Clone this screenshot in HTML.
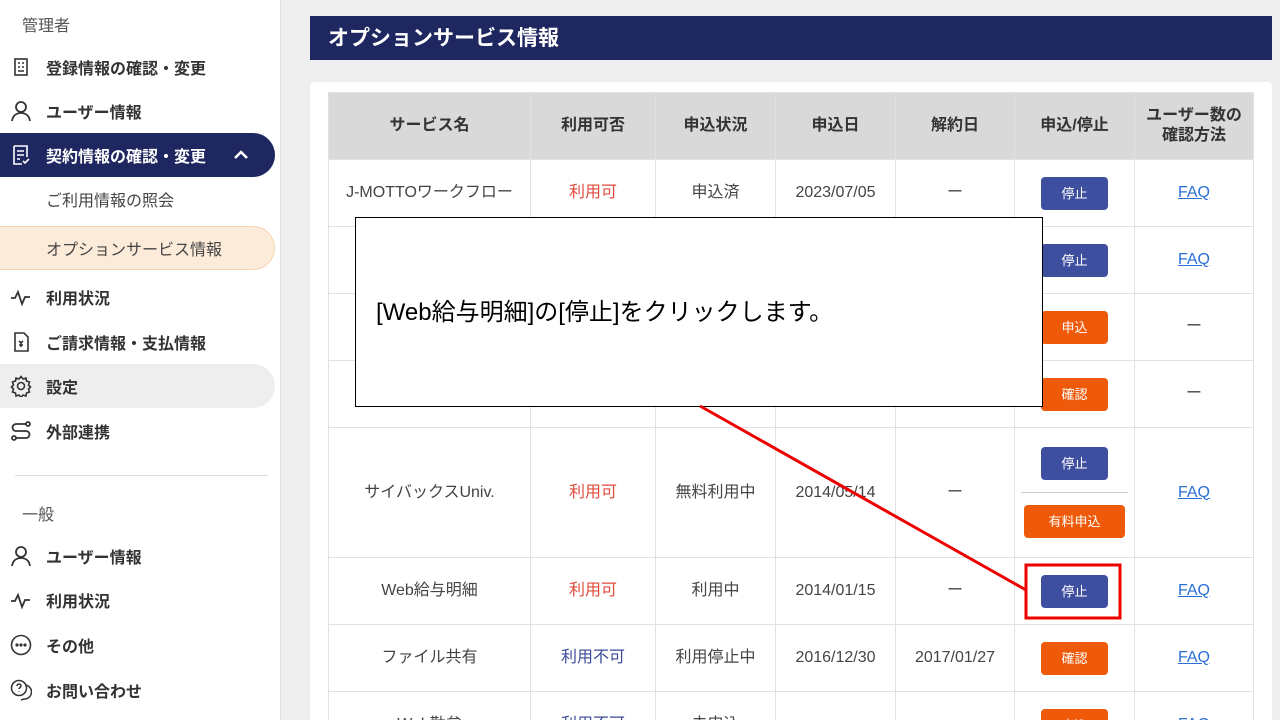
<!DOCTYPE html>
<html style="width:1280px;height:720px;overflow:hidden"><head><meta charset="utf-8"><style>
*{box-sizing:border-box;margin:0;padding:0}
body{width:1280px;height:720px;overflow:hidden;background:#eeeeee;font-family:"Liberation Sans","Noto Sans CJK JP",sans-serif;position:relative;color:#333}
.side{position:absolute;left:0;top:0;width:281px;height:720px;background:#fff;border-right:1px solid #ddd}
.sec{position:absolute;left:22px;font-size:16px;color:#555}
.it{position:absolute;left:0;width:275px;height:44px;display:flex;align-items:center;font-size:16px;font-weight:bold;color:#333}
.it svg{position:absolute;left:10px;width:22px;height:22px}
.it span{position:absolute;left:46px}
.sub{position:absolute;left:0;width:275px;height:44px;display:flex;align-items:center;font-size:16px;color:#444}
.sub span{position:absolute;left:46px}
.hdr{position:absolute;left:310px;top:16px;width:962px;height:44px;background:#1e2760;color:#fff;font-size:21px;font-weight:bold;padding:6px 18px}
.card{position:absolute;left:310px;top:82px;width:962px;height:638px;background:#fff;border-radius:4px 4px 0 0;overflow:hidden}
table{position:absolute;left:18px;top:10px;border-collapse:collapse;font-size:16px;color:#444;line-height:20px}
td,th{border:1px solid #e2e2e2;text-align:center;vertical-align:middle}
th{background:#d9d9d9;font-weight:bold;height:67px;color:#333}
td{height:67px}
.r{color:#e04a3a}.b{color:#3a4a9a}
.bt{display:inline-block;width:67px;height:33px;line-height:33px;border-radius:4px;color:#fff;font-size:13px;background:#3f4fa0;vertical-align:middle}
.o{background:#ee5a0a}
a{color:#2a6fd6;text-decoration:underline}
</style></head><body>
<div class="side">
<div class="sec" style="top:12px">管理者</div>
<div class="it" style="top:45px"><svg viewBox="0 0 22 22" fill="none" stroke="#333" stroke-width="1.6"><rect x="5" y="3" width="12" height="16"/><path d="M8 7h2M12 7h2M8 11h2M12 11h2M8 15h6"/></svg><span>登録情報の確認・変更</span></div>
<div class="it" style="top:89px"><svg viewBox="0 0 22 22" fill="none" stroke="#333" stroke-width="1.8"><circle cx="11" cy="7" r="5"/><path d="M2 21c1-6 5-8 9-8s8 2 9 8"/></svg><span>ユーザー情報</span></div>
<div class="it" style="top:133px;background:#1e2760;color:#fff;border-radius:0 22px 22px 0"><svg viewBox="0 0 22 22" fill="none" stroke="#fff" stroke-width="1.6"><path d="M4 2h13v11M4 2v18h8"/><path d="M7 7h7M7 11h7M7 15h3M13 17l2 2 4-4"/></svg><span>契約情報の確認・変更</span><svg style="left:232px;width:18px" viewBox="0 0 18 18" fill="none" stroke="#fff" stroke-width="2.5"><path d="M3 12l6-6 6 6"/></svg></div>
<div class="sub" style="top:177px"><span>ご利用情報の照会</span></div>
<div class="sub" style="top:226px;background:#fdebd9;border:1px solid #f5d2b0;border-left:none;border-radius:0 22px 22px 0"><span>オプションサービス情報</span></div>
<div class="it" style="top:275px"><svg viewBox="0 0 22 22" fill="none" stroke="#333" stroke-width="1.8"><path d="M1 12h4l3-6 4 12 3-7h5"/></svg><span>利用状況</span></div>
<div class="it" style="top:320px"><svg viewBox="0 0 22 22" fill="none" stroke="#333" stroke-width="1.6"><path d="M5 2h9l4 4v14H5z"/><path d="M9 10l2 2 2-2M11 12v4M9 14h4"/></svg><span>ご請求情報・支払情報</span></div>
<div class="it" style="top:364px;background:#eeeeee;border-radius:0 22px 22px 0"><svg viewBox="0 0 22 22" fill="none" stroke="#333" stroke-width="1.6"><circle cx="11" cy="11" r="3.5"/><path d="M11 1.5l2 2.5 3-1 .5 3 3 1-1 3 2 2-2 2 1 3-3 1-.5 3-3-1-2 2.5-2-2.5-3 1-.5-3-3-1 1-3-2-2 2-2-1-3 3-1 .5-3 3 1z"/></svg><span>設定</span></div>
<div class="it" style="top:409px"><svg viewBox="0 0 22 22" fill="none" stroke="#333" stroke-width="1.8"><circle cx="18" cy="4" r="2"/><circle cx="4" cy="18" r="2"/><path d="M16 4H6a3.5 3.5 0 000 7h10a3.5 3.5 0 010 7H6"/></svg><span>外部連携</span></div>
<div style="position:absolute;left:15px;top:475px;width:253px;border-top:1px solid #ddd"></div>
<div class="sec" style="top:501px">一般</div>
<div class="it" style="top:534px"><svg viewBox="0 0 22 22" fill="none" stroke="#333" stroke-width="1.8"><circle cx="11" cy="7" r="5"/><path d="M2 21c1-6 5-8 9-8s8 2 9 8"/></svg><span>ユーザー情報</span></div>
<div class="it" style="top:578px"><svg viewBox="0 0 22 22" fill="none" stroke="#333" stroke-width="1.8"><path d="M1 12h4l3-6 4 12 3-7h5"/></svg><span>利用状況</span></div>
<div class="it" style="top:623px"><svg viewBox="0 0 22 22" fill="none" stroke="#333" stroke-width="1.6"><circle cx="11" cy="11" r="9.5"/><circle cx="7" cy="11" r=".8" fill="#333"/><circle cx="11" cy="11" r=".8" fill="#333"/><circle cx="15" cy="11" r=".8" fill="#333"/></svg><span>その他</span></div>
<div class="it" style="top:668px"><svg viewBox="0 0 22 22" fill="none" stroke="#333" stroke-width="1.5"><circle cx="9" cy="9" r="7.5"/><path d="M7 7a2 2 0 114 0c0 1.5-2 1.5-2 3M9 12.5v.5M15 6a7 7 0 01-1 14l-3 1"/></svg><span>お問い合わせ</span></div>
</div>
<div class="hdr">オプションサービス情報</div>
<div class="card">
<table>
<tr><th style="width:202px">サービス名</th><th style="width:125px">利用可否</th><th style="width:120px">申込状況</th><th style="width:120px">申込日</th><th style="width:119px">解約日</th><th style="width:120px">申込/停止</th><th style="width:119px">ユーザー数の<br>確認方法</th></tr>
<tr><td>J-MOTTOワークフロー</td><td class="r">利用可</td><td>申込済</td><td>2023/07/05</td><td>ー</td><td><span class="bt">停止</span></td><td><a>FAQ</a></td></tr>
<tr><td></td><td></td><td></td><td></td><td></td><td><span class="bt">停止</span></td><td><a>FAQ</a></td></tr>
<tr><td></td><td></td><td></td><td></td><td></td><td><span class="bt o">申込</span></td><td>ー</td></tr>
<tr><td></td><td></td><td></td><td></td><td></td><td><span class="bt o">確認</span></td><td>ー</td></tr>
<tr><td style="height:130px">サイバックスUniv.</td><td class="r">利用可</td><td>無料利用中</td><td>2014/05/14</td><td>ー</td><td><span class="bt">停止</span><div style="border-top:1px solid #ccc;margin:12px 6px"></div><span class="bt o" style="width:101px">有料申込</span></td><td><a>FAQ</a></td></tr>
<tr><td>Web給与明細</td><td class="r">利用可</td><td>利用中</td><td>2014/01/15</td><td>ー</td><td><span class="bt">停止</span></td><td><a>FAQ</a></td></tr>
<tr><td>ファイル共有</td><td class="b">利用不可</td><td>利用停止中</td><td>2016/12/30</td><td>2017/01/27</td><td><span class="bt o">確認</span></td><td><a>FAQ</a></td></tr>
<tr><td>Web勤怠</td><td class="b">利用不可</td><td>未申込</td><td></td><td></td><td><span class="bt o">申込</span></td><td><a>FAQ</a></td></tr>
</table>
</div>
<div style="position:absolute;left:355px;top:217px;width:688px;height:190px;background:#fff;border:1px solid #000;font-size:24px;color:#000;padding:74px 0 0 20px">[Web給与明細]の[停止]をクリックします。</div>
<svg style="position:absolute;left:0;top:0" width="1280" height="720"><line x1="700" y1="406" x2="1026" y2="590" stroke="#e00" stroke-width="3"/><rect x="1026" y="565" width="94" height="53" fill="none" stroke="#e00" stroke-width="3"/></svg>
</body></html>
